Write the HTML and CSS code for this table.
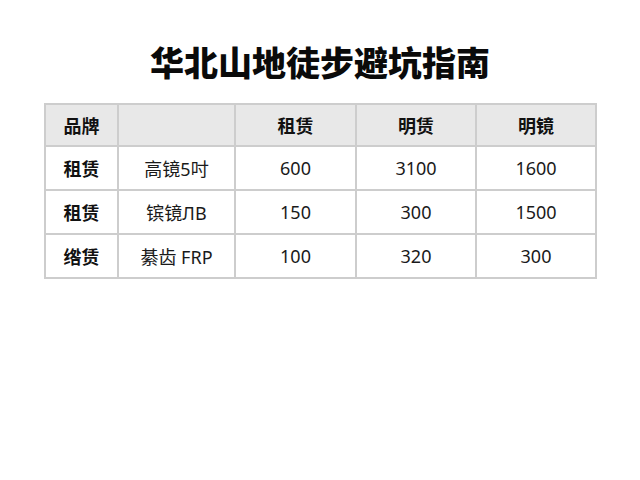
FILE: index.html
```html
<!DOCTYPE html>
<html lang="zh">
<head>
<meta charset="utf-8">
<link rel="stylesheet" href="styles.css">
</head>
<body>
<main class="page">
  <h1 class="title">华北山地徒步避坑指南</h1>
  <table class="grid">
    <colgroup>
      <col class="c1"><col class="c2"><col class="c3"><col class="c4"><col class="c5">
    </colgroup>
    <thead>
      <tr><th>品牌</th><th></th><th>租赁</th><th>明赁</th><th>明镜</th></tr>
    </thead>
    <tbody>
      <tr><th>租赁</th><td>高镜5吋</td><td>600</td><td>3100</td><td>1600</td></tr>
      <tr><th>租赁</th><td>镔镜ЛB</td><td>150</td><td>300</td><td>1500</td></tr>
      <tr><th>绺赁</th><td>綦齿 FRP</td><td>100</td><td>320</td><td>300</td></tr>
    </tbody>
  </table>
</main>
</body>
</html>
```
FILE: styles.css
```css
html, body {
  margin: 0;
  padding: 0;
  background: #ffffff;
}
body {
  font-family: "Noto Sans CJK SC", "Noto Sans", sans-serif;
  color: #111;
}
.page {
  width: 640px;
  height: 480px;
  display: flex;
  flex-direction: column;
  align-items: center;
}
.title {
  margin: 40px 0 0 0;
  height: 44px;
  line-height: 44px;
  font-size: 34px;
  font-weight: 900;
  color: #0a0a0a;
}
.grid {
  margin-top: 19px;
  margin-left: 1px;
  border-collapse: collapse;
  border: 2px solid #c9c9c9;
  width: 551px;
  table-layout: fixed;
}
.c1 { width: 73px; }
.c2 { width: 117px; }
.c3 { width: 121px; }
.c4 { width: 120px; }
.c5 { width: 120px; }
.grid th, .grid td {
  border: 2px solid #cdcdcd;
  text-align: center;
  padding: 0;
  font-size: 18px;
}
.grid thead tr { height: 42px; }
.grid thead th {
  background: #e8e8e8;
  font-weight: 700;
  font-size: 18px;
}
.grid tbody tr { height: 44px; }
.grid tbody th {
  font-weight: 700;
  font-size: 18px;
}
.grid tbody td {
  font-weight: 400;
  font-family: "Noto Sans", "Noto Sans CJK SC", sans-serif;
  font-size: 18px;
  color: #1a1a1a;
}
```
